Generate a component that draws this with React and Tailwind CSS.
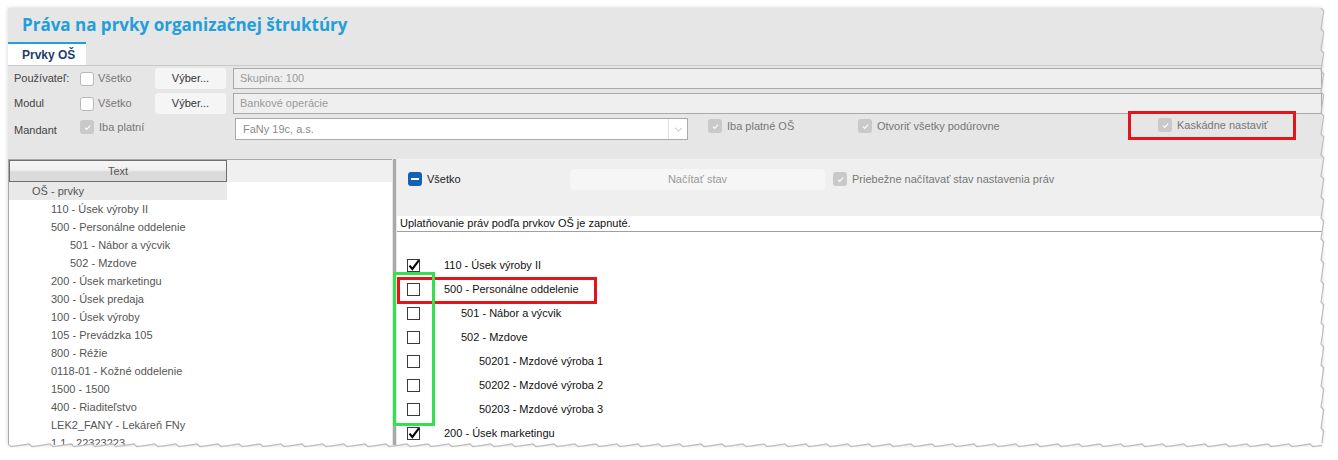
import React from 'react';

const UI = { fontFamily: '"Liberation Sans", Arial, sans-serif' };
const TITLE = { fontFamily: '"Open Sans", "Noto Sans", sans-serif' };

const leftTree = [
  ['OŠ - prvky', 0],
  ['110 - Úsek výroby II', 1],
  ['500 - Personálne oddelenie', 1],
  ['501 - Nábor a výcvik', 2],
  ['502 - Mzdove', 2],
  ['200 - Úsek marketingu', 1],
  ['300 - Úsek predaja', 1],
  ['100 - Úsek výroby', 1],
  ['105 - Prevádzka 105', 1],
  ['800 - Réžie', 1],
  ['0118-01 - Kožné oddelenie', 1],
  ['1500 - 1500', 1],
  ['400 - Riaditeľstvo', 1],
  ['LEK2_FANY - Lekáreň FNy', 1],
  ['1.1 - 22323223', 1],
];

const rightTree = [
  ['110 - Úsek výroby II', 0, true],
  ['500 - Personálne oddelenie', 0, false],
  ['501 - Nábor a výcvik', 1, false],
  ['502 - Mzdove', 1, false],
  ['50201 - Mzdové výroba 1', 2, false],
  ['50202 - Mzdové výroba 2', 2, false],
  ['50203 - Mzdové výroba 3', 2, false],
  ['200 - Úsek marketingu', 0, true],
];

const leftIndent = ['pl-[23px]', 'pl-[42px]', 'pl-[61px]'];
const rightIndent = ['pl-[24px]', 'pl-[41px]', 'pl-[59px]'];

const FormCheck = ({ checked }) =>
  checked ? (
    <span className="flex h-[14px] w-[14px] shrink-0 items-center justify-center rounded-[3px] bg-[#c9c9c9]">
      <svg viewBox="0 0 10 10" className="h-[9px] w-[9px]">
        <path d="M2.2 5.2l1.9 1.9 3.8-4.2" fill="none" stroke="#fff" strokeWidth="1.2" />
      </svg>
    </span>
  ) : (
    <span className="h-[14px] w-[14px] shrink-0 rounded-[3px] border border-[#b8b8b8] bg-white" />
  );

const TreeCheck = ({ checked }) => (
  <span className="relative h-[13px] w-[13px] shrink-0 border border-[#3a3a3a] bg-white">
    {checked && (
      <svg viewBox="0 0 13 13" className="absolute left-[-1px] top-[-2px] h-[14px] w-[14px]">
        <path d="M2.3 7l2.7 3.2L11 2.2" fill="none" stroke="#000" strokeWidth="1.9" />
      </svg>
    )}
  </span>
);

const jagged = (len, vertical) => {
  const pts = [];
  for (let i = 0; i <= len; i += 3) {
    const o = 2 + ((i * 37) % 7) * 0.45;
    pts.push(vertical ? `${o},${i}` : `${i},${o}`);
  }
  return pts.join(' ');
};

const FormRow = ({ label, value }) => (
  <div className="flex h-[21px] items-center">
    <span className="w-[72px] pl-[6px] text-[11px] text-[#444]">{label}</span>
    <FormCheck />
    <span className="ml-[4px] w-[57px] text-[11px] text-[#777]">Všetko</span>
    <button className="h-[21px] w-[71px] rounded-[3px] bg-[#f5f5f5] text-[11px] text-[#333]">Výber...</button>
    <div className="ml-[7px] flex h-[21px] flex-1 items-center border border-[#a9a9a9] bg-[#efefef] pl-[6px] text-[11px] text-[#9a9a9a]">
      {value}
    </div>
  </div>
);

export default function App() {
  return (
    <div className="h-[460px] w-[1338px] overflow-hidden bg-white pl-[8px] pt-[8px]" style={UI}>
      <div className="relative flex h-[437px] w-[1314px] flex-col bg-[#e6e6e6] shadow-[0_0_4px_rgba(0,0,0,0.18)]">
        <div className="h-[34px] pl-[14px] pt-[6px]">
          <h1 className="text-[17px] font-bold leading-[22px] text-[#229ed9]" style={TITLE}>
            Práva na prvky organizačnej štruktúry
          </h1>
        </div>

        <div className="flex h-[24px] border-b border-[#c9c9c9]">
          <div className="w-[78px] border-t-2 border-[#229ed9] bg-white pl-[14px] pt-[2px] text-[12px] font-bold text-[#1d3c6b]">
            Prvky OŠ
          </div>
        </div>

        <div className="flex flex-col gap-[4px] pt-[2px]">
          <FormRow label="Používateľ:" value="Skupina: 100" />
          <FormRow label="Modul" value="Bankové operácie" />
          <div className="flex h-[26px] items-start">
            <span className="w-[72px] pl-[6px] pt-[4px] text-[11px] text-[#444]">Mandant</span>
            <span className="pt-[2px]">
              <FormCheck checked />
            </span>
            <span className="ml-[5px] w-[136px] pt-[1px] text-[11px] text-[#777]">Iba platní</span>
            <div className="flex h-[22px] w-[453px] items-center border border-[#a9a9a9] bg-white text-[11px] text-[#8a8a8a]">
              <span className="flex-1 pl-[7px]">FaNy 19c, a.s.</span>
              <span className="flex h-full w-[19px] items-center justify-center border-l border-[#e2e2e2]">
                <svg viewBox="0 0 10 6" className="h-[5px] w-[9px]">
                  <path d="M1 1l4 4 4-4" fill="none" stroke="#aaa" strokeWidth="1" />
                </svg>
              </span>
            </div>
            <span className="ml-[20px] pt-[1px]">
              <FormCheck checked />
            </span>
            <span className="ml-[5px] w-[131px] text-[11px] text-[#777]">Iba platné OŠ</span>
            <span className="pt-[1px]">
              <FormCheck checked />
            </span>
            <span className="ml-[5px] w-[251px] text-[11px] text-[#777]">Otvoriť všetky podúrovne</span>
            <div className="mt-[-7px] flex h-[29px] w-[168px] items-start border-[3px] border-[#e4141b] pl-[27px] pt-[3px]">
              <span className="pt-[1px]">
                <FormCheck checked />
              </span>
              <span className="ml-[5px] text-[11px] text-[#777]">Kaskádne nastaviť</span>
            </div>
          </div>
        </div>

        <div className="mt-[15px] flex min-h-0 flex-1">
          <div className="flex w-[384px] flex-col overflow-hidden border-l border-t border-[#a9a9a9] bg-white">
            <div className="flex h-[22px] bg-[#f0f0f0]">
              <div className="flex h-[22px] w-[218px] items-center justify-center border border-[#6f6f6f] bg-[linear-gradient(#f5f5f5_0%,#f0f0f0_45%,#dadada_55%,#dcdcdc_100%)] text-[11px] text-[#555]">
                Text
              </div>
            </div>
            {leftTree.map(([t, lvl], i) => (
              <div
                key={t}
                className={`flex h-[18px] w-[218px] shrink-0 items-center text-[11px] text-[#555] ${leftIndent[lvl]} ${i === 0 ? 'bg-[#e9e9e9]' : ''}`}
              >
                {t}
              </div>
            ))}
          </div>

          <div className="flex w-[5px] shrink-0 bg-[#e6e6e6]">
            <div className="ml-[1px] w-[3px] bg-[#a9a9a9]" />
          </div>

          <div className="relative flex flex-1 flex-col bg-white">
            <div className="flex h-[61px] items-start bg-[#efefef] pl-[11px] pt-[10px]">
              <div className="flex h-[20px] items-center">
                <span className="flex h-[14px] w-[14px] items-center justify-center rounded-[3px] bg-[#1261b3]">
                  <span className="h-[2px] w-[8px] bg-white" />
                </span>
                <span className="ml-[5px] w-[143px] text-[11px] text-[#222]">Všetko</span>
                <button className="h-[21px] w-[255px] rounded-[4px] bg-[#f6f6f6] text-[11px] text-[#9a9a9a]">Načítať stav</button>
                <span className="ml-[8px]">
                  <FormCheck checked />
                </span>
                <span className="ml-[5px] text-[11px] text-[#777]">Priebežne načítavať stav nastavenia práv</span>
              </div>
            </div>
            <div className="flex h-[16px] items-center border-b border-[#a0a0a0] pl-[3px] text-[11px] text-[#111]">
              Uplatňovanie práv podľa prvkov OŠ je zapnuté.
            </div>
            <div className="flex flex-col pt-[21px]">
              {rightTree.map(([t, lvl, c]) => (
                <div key={t} className="flex h-[24px] items-center pl-[10px]">
                  <TreeCheck checked={c} />
                  <span className={`text-[11px] text-[#111] ${rightIndent[lvl]}`}>{t}</span>
                </div>
              ))}
            </div>

            <div className="pointer-events-none absolute left-0 top-[118px] h-[27px] w-[200px] border-[3px] border-[#e4141b]" />
            <div className="pointer-events-none absolute left-[-4px] top-[113px] h-[154px] w-[42px] border-[3px] border-[#35e04e]" />
          </div>
        </div>

        <svg className="absolute right-[-5px] top-0 h-[437px] w-[8px]" viewBox="0 0 8 437" preserveAspectRatio="none">
          <polyline points={jagged(437, true)} fill="none" stroke="#bdbdbd" strokeWidth="1.2" />
        </svg>
        <svg className="absolute bottom-[-5px] left-0 h-[8px] w-[1314px]" viewBox="0 0 1314 8" preserveAspectRatio="none">
          <polyline points={jagged(1314, false)} fill="none" stroke="#bdbdbd" strokeWidth="1.2" />
        </svg>
      </div>
    </div>
  );
}
